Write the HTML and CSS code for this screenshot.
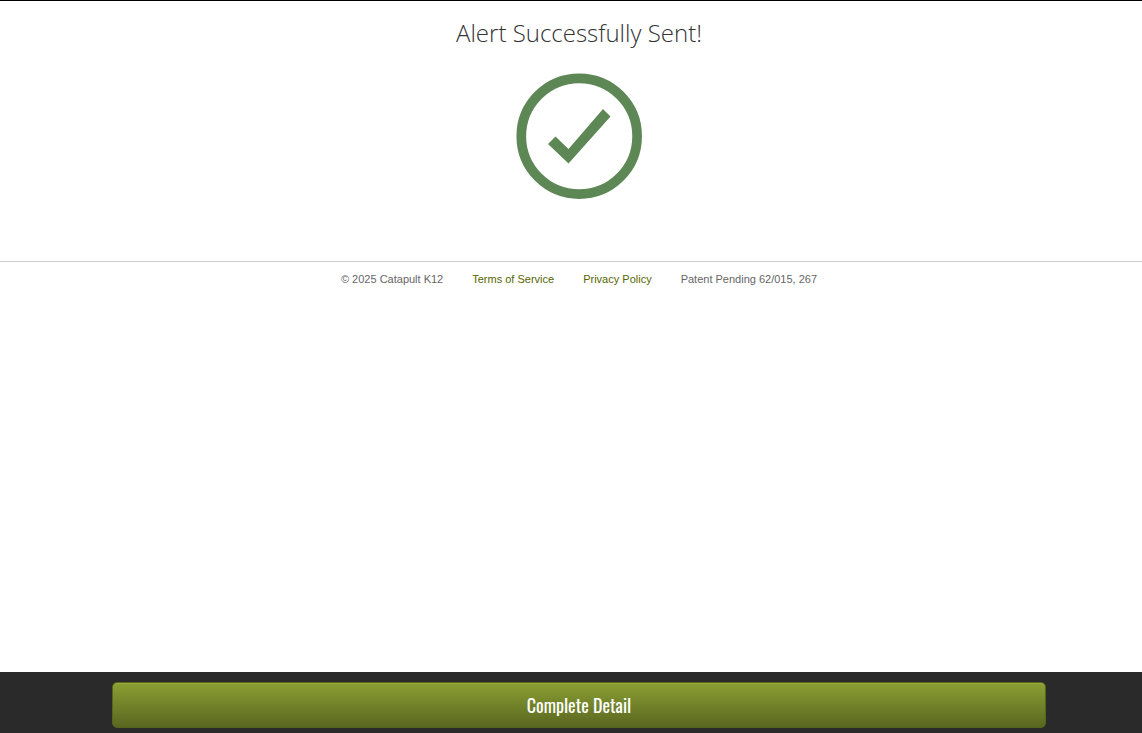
FILE: index.html
```
<!DOCTYPE html>
<html lang="en">
<head>
    <meta charset="UTF-8">
    <meta name="viewport" content="width=device-width, initial-scale=1.0">
    <title>Alert Sent</title>
    <link rel="stylesheet" href="styles.css">
</head>
<body>
    <main class="content">
        <h1 class="title">Alert Successfully Sent!</h1>
        <svg class="success-icon" viewBox="0 0 126 126" role="img" aria-label="Success">
            <circle cx="63.200" cy="63.200" r="57.900" fill="none" stroke="#5e8756" stroke-width="9.700"/>
            <path d="M32 71 L39.500 63.500 L52.500 76 L87 36 L94.500 43.500 L52.500 90.500 Z" fill="#5e8756"/>
        </svg>
    </main>

    <footer class="footer">
        <span>© 2025 Catapult K12</span>
        <a href="#">Terms of Service</a>
        <a href="#">Privacy Policy</a>
        <span>Patent Pending 62/015, 267</span>
    </footer>

    <div class="action-bar">
        <button type="button" class="btn">Complete Detail</button>
    </div>
</body>
</html>
```
FILE: styles.css
```
* {
    box-sizing: border-box;
}

body {
    display: flex;
    flex-direction: column;
    min-height: 100vh;
    margin: 0;
    border-top: 1px solid #000;
    background-color: #fff;
    color: #333;
    font-family: "Liberation Sans", Arial, sans-serif;
}

.content {
    display: flex;
    flex-direction: column;
    align-items: center;
    padding: 16px 0 62px 16px;
}

.title {
    margin: 0 0 24px;
    font-family: "Open Sans", sans-serif;
    font-size: 24px;
    font-weight: 300;
    line-height: 32px;
}

.success-icon {
    width: 126px;
    height: 126px;
}

.footer {
    display: flex;
    flex-wrap: wrap;
    justify-content: center;
    gap: 0 29px;
    padding: 9px 0 10px 16px;
    border-top: 1px solid #ccc;
    color: #666;
    font-size: 11px;
    line-height: 16px;
}

.footer a {
    color: #566600;
    text-decoration: none;
}

.action-bar {
    position: sticky;
    bottom: 0;
    display: flex;
    justify-content: center;
    margin-top: auto;
    padding: 10px 0 5px 16px;
    background-color: #2a2a2a;
}

.btn {
    width: 83%;
    height: 46px;
    padding: 0;
    border: 1px solid #56651c;
    border-radius: 5px;
    background: linear-gradient(#8a9f33, #5a6620);
    box-shadow: inset 0 1px 0 #99ac3e;
    color: #fff;
    font-family: Oswald, "Liberation Sans Narrow", sans-serif;
    font-size: 18px;
    cursor: pointer;
}
```
